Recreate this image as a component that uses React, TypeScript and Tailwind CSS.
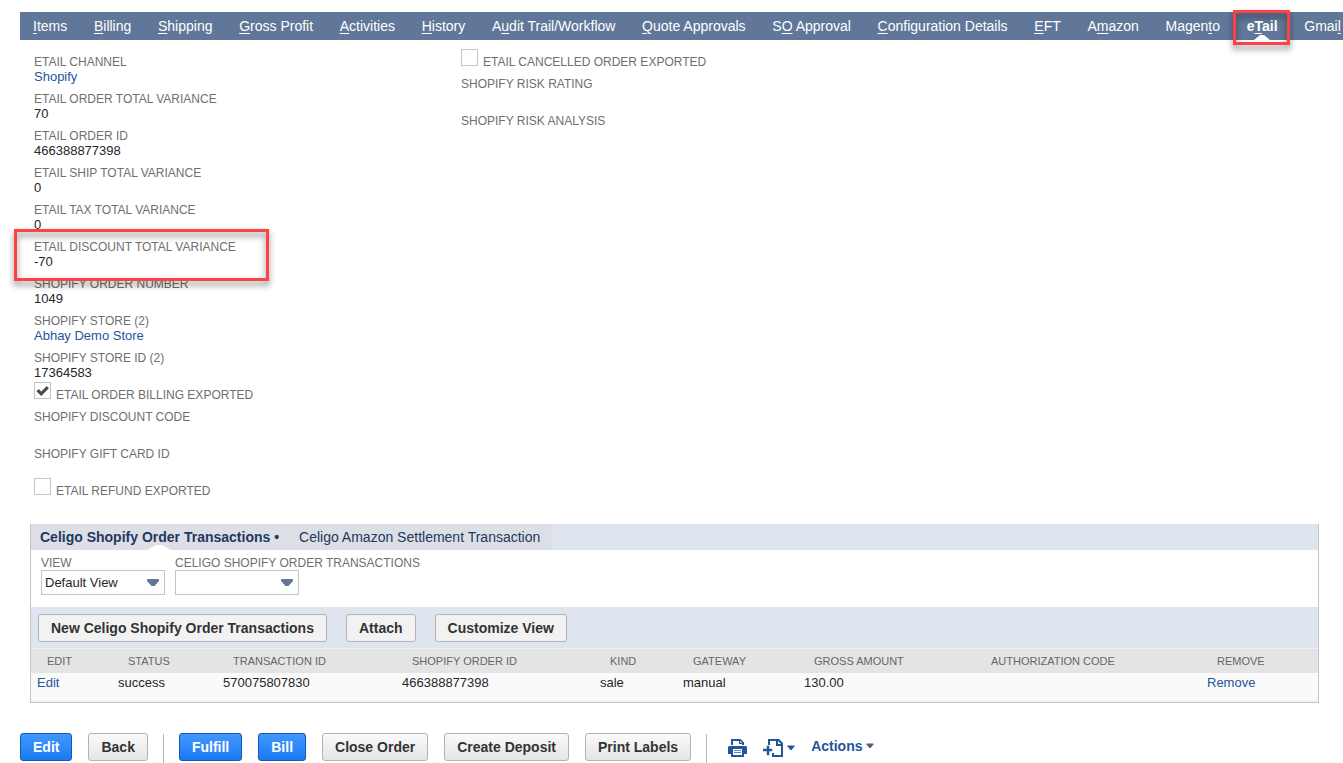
import React, { useState } from 'react';
import clsx from 'clsx';

interface NavTab {
  label: string;
  keyIndex: number;
}

const navTabs: NavTab[] = [
  { label: 'Items', keyIndex: 0 },
  { label: 'Billing', keyIndex: 0 },
  { label: 'Shipping', keyIndex: 0 },
  { label: 'Gross Profit', keyIndex: 0 },
  { label: 'Activities', keyIndex: 0 },
  { label: 'History', keyIndex: 0 },
  { label: 'Audit Trail/Workflow', keyIndex: 1 },
  { label: 'Quote Approvals', keyIndex: 0 },
  { label: 'SO Approval', keyIndex: 1 },
  { label: 'Configuration Details', keyIndex: 0 },
  { label: 'EFT', keyIndex: 0 },
  { label: 'Amazon', keyIndex: 1 },
  { label: 'Magento', keyIndex: 5 },
  { label: 'eTail', keyIndex: 1 },
  { label: 'Gmail', keyIndex: 4 },
];

const columns = [
  { name: 'Edit', width: 'w-[81px]' },
  { name: 'Status', width: 'w-[105px]' },
  { name: 'Transaction ID', width: 'w-[179px]' },
  { name: 'Shopify Order ID', width: 'w-[198px]' },
  { name: 'Kind', width: 'w-[83px]' },
  { name: 'Gateway', width: 'w-[121px]' },
  { name: 'Gross Amount', width: 'w-[177px]' },
  { name: 'Authorization Code', width: 'w-[226px]' },
  { name: 'Remove', width: 'w-[117px]' },
];

const transactions = [
  { status: 'success', id: '570075807830', orderId: '466388877398', kind: 'sale', gateway: 'manual', amount: '130.00', authCode: '' },
];

const Highlight = ({ className }: { className: string }) => (
  <span
    className={clsx(
      'pointer-events-none absolute z-10 border-3 border-[#fb4343] drop-shadow-[0_4px_3px_rgba(0,0,0,0.5)]',
      className
    )}
  />
);

const Field = ({ label, value, link, highlight }: { label: string; value?: string; link?: boolean; highlight?: boolean }) => (
  <div className="relative">
    <div className="h-[15px] text-xs leading-[17px] text-[#6f6f6f] uppercase">{label}</div>
    <div className="h-[15px] text-[13px] leading-[15px] text-[#262626]">
      {link ? <a href="#" className="text-[#255599]">{value}</a> : value}
    </div>
    {highlight && <Highlight className="-top-2.5 -left-5 h-[52px] w-[255px]" />}
  </div>
);

const CheckField = ({ id, label, defaultChecked }: { id: string; label: string; defaultChecked?: boolean }) => {
  const [checked, setChecked] = useState(!!defaultChecked);

  return (
    <div className="-mt-[5px] flex h-5 items-start gap-[5px]">
      <span className="relative size-[17px] shrink-0">
        <input
          id={id}
          type="checkbox"
          checked={checked}
          onChange={(e) => setChecked(e.target.checked)}
          className="block size-[17px] appearance-none border border-[#c4c4c4] bg-white"
        />
        {checked && (
          <svg viewBox="0 0 17 17" className="pointer-events-none absolute inset-0 size-[17px]">
            <path d="M3.6 8.2 7.2 11.8 13.8 5.2" fill="none" stroke="#4a4a4a" strokeWidth="3.2" />
          </svg>
        )}
      </span>
      <label htmlFor={id} className="pt-[5px] text-xs leading-[17px] text-[#6f6f6f] uppercase">{label}</label>
    </div>
  );
};

const SelectField = ({ id, label, options }: { id: string; label: string; options: string[] }) => (
  <div>
    <label htmlFor={id} className="block h-[15px] text-xs leading-[17px] text-[#6f6f6f] uppercase">{label}</label>
    <div className="relative w-[124px]">
      <select
        id={id}
        className="block h-[25px] w-full appearance-none border border-[#c4c4c4] bg-white pr-6 pl-[3px] text-[13px] text-[#262626]"
      >
        {options.map((option) => (
          <option key={option}>{option}</option>
        ))}
      </select>
      <svg viewBox="0 0 12 8" className="pointer-events-none absolute top-[9px] right-1.5 h-2 w-3">
        <path d="M0.5 0H11.5L12 1V2L7.5 7H4.5L0 2V1Z" fill="#607799" />
      </svg>
    </div>
  </div>
);

interface ButtonProps {
  children: React.ReactNode;
  variant?: 'default' | 'primary' | 'flat';
}

const Button = ({ children, variant = 'default' }: ButtonProps) => (
  <button
    type="button"
    className={clsx(
      'h-7 shrink-0 rounded-[3px] border px-3 text-sm leading-5 font-bold whitespace-nowrap',
      variant === 'primary' && 'border-[#125ab2] bg-linear-to-b from-[#4297ff] to-[#187bf2] text-white',
      variant === 'default' && 'border-[#b2b2b2] bg-linear-to-b from-[#fafafa] to-[#e5e5e5] text-[#333333]',
      variant === 'flat' && 'border-[#b2b2b2] bg-[#f2f2f2] text-[#333333]'
    )}
  >
    {children}
  </button>
);

const Divider = () => <span className="-mx-px mt-px h-[29px] w-px shrink-0 bg-[#b8b8b8]" />;

const CaretDown = ({ className }: { className?: string }) => (
  <svg viewBox="0 0 8 6" className={clsx('h-1.5 w-2', className)}>
    <path d="M0.5 0.5H7.5V1.5L4.5 5H3.5L0.5 1.5Z" fill="currentColor" />
  </svg>
);

const PrintIcon = () => (
  <svg viewBox="0 0 19 18" className="h-[18px] w-[19px]" fill="#255599">
    <path d="M3 0H12.5L16 3.5V6H14V5H11V2H5V6H3Z" />
    <path d="M12.2 1.8V3.8H14.2Z" fill="#fff" />
    <path fillRule="evenodd" d="M1 7H18L19 8V15H16V18H3V15H0V8ZM5 10V16H14V10Z" />
    <path d="M6 11H13V12H6ZM6 13H13V14H6Z" opacity="0.7" />
  </svg>
);

const NewPageIcon = () => (
  <svg viewBox="0 0 21 18" className="h-[18px] w-[21px]" fill="#255599">
    <path d="M5 0H16L20 4V18H9V14H11V16H18V7H13V2H7V6H5Z" />
    <path d="M15 2V5H18Z" fill="#fff" />
    <path d="M4 7H6V10H9V12H6V16H4V12H0V10H4Z" stroke="#255599" strokeWidth="0.5" />
  </svg>
);

const TopNav = () => (
  <nav className="ml-5 flex h-7 justify-between gap-2 bg-[#607799] pr-0.5 pl-[13px] text-sm text-white">
    {navTabs.map(({ label, keyIndex }) => {
      const active = label === 'eTail';
      return (
        <a
          key={label}
          href="#"
          className={clsx('relative shrink-0 leading-7 whitespace-nowrap', active && 'font-bold')}
        >
          {label.slice(0, keyIndex)}
          <span className="underline underline-offset-2">{label[keyIndex]}</span>
          {label.slice(keyIndex + 1)}
          {active && (
            <>
              <svg viewBox="0 0 16 5" className="absolute bottom-0 left-1/2 h-[5px] w-4 -translate-x-1/2">
                <path d="M0 5 6 0H10L16 5Z" fill="#fff" />
              </svg>
              <Highlight className="-top-0.5 -right-3 -left-3.5 h-[35px]" />
            </>
          )}
        </a>
      );
    })}
  </nav>
);

const Transactions = () => (
  <section className="mt-[26px] mr-6 ml-[30px] border-x border-b border-[#c4c4c4]">
    <div className="flex h-[26px] bg-[#dfe5ef] text-sm leading-[26px] text-[#24385b]">
      <div className="flex bg-[#dcdfe6]">
        <a href="#" className="relative pr-2 pl-[9px] font-bold">
          Celigo Shopify Order Transactions •
          <svg viewBox="0 0 24 5" className="absolute bottom-0 left-1/2 h-[5px] w-6 -translate-x-1/2">
            <path d="M0 5 9 0H15L24 5Z" fill="#fff" />
          </svg>
        </a>
        <a href="#" className="px-3">Celigo Amazon Settlement Transaction</a>
      </div>
    </div>

    <div className="flex gap-2.5 px-2.5 pt-[5px] pb-3">
      <SelectField id="view" label="View" options={['Default View']} />
      <SelectField id="order-transactions" label="Celigo Shopify Order Transactions" options={['']} />
    </div>

    <div className="flex gap-[19px] bg-[#dfe5ef] px-[7px] pt-[7px] pb-1.5">
      <Button variant="flat">New Celigo Shopify Order Transactions</Button>
      <Button variant="flat">Attach</Button>
      <Button variant="flat">Customize View</Button>
    </div>

    <div className="border-t border-b-2 border-[#f2f2f2]">
      <table className="w-full table-fixed border-collapse text-left">
        <thead>
          <tr className="h-6 bg-[#e4e4e4]">
            {columns.map(({ name, width }) => (
              <th key={name} className={clsx('pl-4 text-[11px] font-normal text-[#666666] uppercase', width)}>
                {name}
              </th>
            ))}
          </tr>
        </thead>
        <tbody>
          {transactions.map((t) => (
            <tr key={t.id} className="h-[27px] bg-[#fafafa] align-top text-[13px] leading-5 text-[#262626]">
              <td className="pl-1.5"><a href="#" className="text-[#255599]">Edit</a></td>
              <td className="pl-1.5">{t.status}</td>
              <td className="pl-1.5">{t.id}</td>
              <td className="pl-1.5">{t.orderId}</td>
              <td className="pl-1.5">{t.kind}</td>
              <td className="pl-1.5">{t.gateway}</td>
              <td className="pl-1.5">{t.amount}</td>
              <td className="pl-1.5">{t.authCode}</td>
              <td className="pl-1.5"><a href="#" className="text-[#255599]">Remove</a></td>
            </tr>
          ))}
        </tbody>
      </table>
    </div>
  </section>
);

export default function App() {
  return (
    <div className="overflow-hidden bg-white pt-3 font-['Liberation_Sans',Arial,sans-serif]">
      <TopNav />

      <main>
        <div className="flex pt-3.5 pl-[34px]">
          <div className="flex w-[427px] flex-col gap-[7px]">
            <Field label="eTail Channel" value="Shopify" link />
            <Field label="eTail Order Total Variance" value="70" />
            <Field label="eTail Order ID" value="466388877398" />
            <Field label="eTail Ship Total Variance" value="0" />
            <Field label="eTail Tax Total Variance" value="0" />
            <Field label="eTail Discount Total Variance" value="-70" highlight />
            <Field label="Shopify Order Number" value="1049" />
            <Field label="Shopify Store (2)" value="Abhay Demo Store" link />
            <Field label="Shopify Store ID (2)" value="17364583" />
            <CheckField id="billing-exported" label="eTail Order Billing Exported" defaultChecked />
            <Field label="Shopify Discount Code" />
            <Field label="Shopify Gift Card ID" />
            <CheckField id="refund-exported" label="eTail Refund Exported" />
          </div>
          <div className="flex flex-col gap-[7px]">
            <CheckField id="cancelled-exported" label="eTail Cancelled Order Exported" />
            <Field label="Shopify Risk Rating" />
            <Field label="Shopify Risk Analysis" />
          </div>
        </div>

        <Transactions />
      </main>

      <footer className="mt-[30px] flex gap-4 pl-5">
        <Button variant="primary">Edit</Button>
        <Button>Back</Button>
        <Divider />
        <Button variant="primary">Fulfill</Button>
        <Button variant="primary">Bill</Button>
        <Button>Close Order</Button>
        <Button>Create Deposit</Button>
        <Button>Print Labels</Button>
        <Divider />
        <div className="flex h-7 items-center gap-4 pl-1.5 text-[#255599]">
          <button type="button" aria-label="Print" className="pt-0.5"><PrintIcon /></button>
          <button type="button" aria-label="Create new" className="flex items-center gap-[3px] pt-0.5">
            <NewPageIcon />
            <CaretDown />
          </button>
          <button type="button" className="flex items-center gap-1 pb-0.5 text-sm font-bold">
            Actions
            <CaretDown className="text-[#4d5f79]" />
          </button>
        </div>
      </footer>
    </div>
  );
}
